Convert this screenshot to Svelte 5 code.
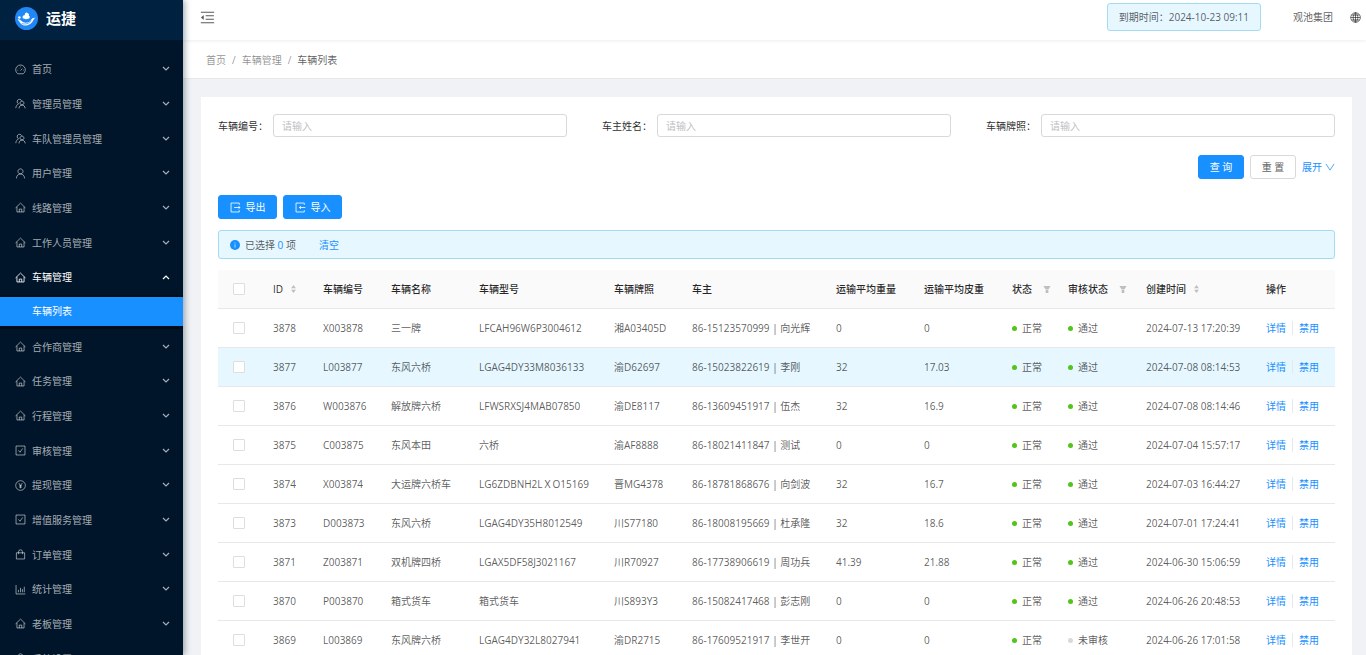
<script>
    // Sidebar menu
    const menu = [
        { label: '首页', icon: 'dashboard' },
        { label: '管理员管理', icon: 'team' },
        { label: '车队管理员管理', icon: 'team' },
        { label: '用户管理', icon: 'user' },
        { label: '线路管理', icon: 'home' },
        { label: '工作人员管理', icon: 'home' },
        { label: '车辆管理', icon: 'home', open: true, children: ['车辆列表'] },
        { label: '合作商管理', icon: 'home' },
        { label: '任务管理', icon: 'home' },
        { label: '行程管理', icon: 'home' },
        { label: '审核管理', icon: 'check' },
        { label: '提现管理', icon: 'money' },
        { label: '增值服务管理', icon: 'check' },
        { label: '订单管理', icon: 'bag' },
        { label: '统计管理', icon: 'chart' },
        { label: '老板管理', icon: 'home' },
        { label: '系统设置', icon: 'user' }
    ];

    // Stroke paths on a 16x16 grid
    const icons = {
        dashboard: 'M4 14.2a7 7 0 1 1 8 0zM8 9.5l2.6-2.8M3.6 9h1M11.6 9h1M8 3.8v1M4.8 5.6l.7.7',
        team: 'M5.2 8.4a3.4 3.4 0 1 1 4.4-4.6M1.2 14.8c.2-3 1.600-5.200 4-6.400M10.2 10.200a2.900 2.900 0 1 0-.1 0M5.800 15.200c.2-3 2-5 4.400-5s4.400 2 4.600 5',
        user: 'M8 8.600a3.700 3.700 0 1 0-.1 0M2 15.200c.3-4 2.700-6.600 6-6.600s5.700 2.600 6 6.600',
        home: 'M.8 8.600L8 1.600l7.200 7M2.800 7v7.500h10.400V7M6.200 14.500V10.300h3.600v4.200',
        check: 'M1.500 1.500h13v13h-13zM5 7.800l2.300 2.700L11.200 5',
        money: 'M8 1a7 7 0 1 0 .1 0zM5.500 4.500L8 8l2.500-3.500M8 8v4M6 8.300h4M6 10.300h4',
        bag: 'M2 5.500h12v9H2zM5.200 7.500V4a2.800 2.800 0 0 1 5.600 0v3.500',
        chart: 'M1.500 1.500v13h13.500M5 12V8.500M8 12V5.500M10.800 12V7.500M13.500 12V4',
        export: 'M13.500 4V1.500h-12v13h12V12M6 8h8.500M12.300 5.800L14.500 8l-2.200 2.200',
        import: 'M13.500 4V1.500h-12v13h12V12M15 8H6.500M8.700 5.800L6.500 8l2.200 2.200',
        globe: 'M8 1a7 7 0 1 0 .1 0zM8 1v14M1 8h14M2.200 4.500h11.600M2.200 11.500h11.600M8 1C3.500 5 3.500 11 8 15M8 1c4.500 4 4.500 10 0 14',
        down: 'M1.500 3L8 13l6.500-10'
    };

    const fields = [
        { id: 'code', label: '车辆编号' },
        { id: 'owner', label: '车主姓名' },
        { id: 'plate', label: '车辆牌照' }
    ];
    let query = { code: '', owner: '', plate: '' };

    const columns = [
        { title: 'ID', width: 50, sort: true },
        { title: '车辆编号', width: 68 },
        { title: '车辆名称', width: 88 },
        { title: '车辆型号', width: 135 },
        { title: '车辆牌照', width: 78 },
        { title: '车主', width: 144 },
        { title: '运输平均重量', width: 88 },
        { title: '运输平均皮重', width: 88 },
        { title: '状态', width: 56, filter: true },
        { title: '审核状态', width: 78, filter: true },
        { title: '创建时间', width: 120, sort: true },
        { title: '操作', width: 81 }
    ];

    const rows = [
        { id: 3878, code: 'X003878', name: '三一牌', model: 'LFCAH96W6P3004612', plate: '湘A03405D', owner: '86-15123570999 | 向光辉', gross: '0', tare: '0', passed: true, created: '2024-07-13 17:20:39' },
        { id: 3877, code: 'L003877', name: '东风六桥', model: 'LGAG4DY33M8036133', plate: '渝D62697', owner: '86-15023822619 | 李刚', gross: '32', tare: '17.03', passed: true, created: '2024-07-08 08:14:53' },
        { id: 3876, code: 'W003876', name: '解放牌六桥', model: 'LFWSRXSJ4MAB07850', plate: '渝DE8117', owner: '86-13609451917 | 伍杰', gross: '32', tare: '16.9', passed: true, created: '2024-07-08 08:14:46' },
        { id: 3875, code: 'C003875', name: '东风本田', model: '六桥', plate: '渝AF8888', owner: '86-18021411847 | 测试', gross: '0', tare: '0', passed: true, created: '2024-07-04 15:57:17' },
        { id: 3874, code: 'X003874', name: '大运牌六桥车', model: 'LG6ZDBNH2LＸO15169', plate: '晋MG4378', owner: '86-18781868676 | 向剑波', gross: '32', tare: '16.7', passed: true, created: '2024-07-03 16:44:27' },
        { id: 3873, code: 'D003873', name: '东风六桥', model: 'LGAG4DY35H8012549', plate: '川S77180', owner: '86-18008195669 | 杜承隆', gross: '32', tare: '18.6', passed: true, created: '2024-07-01 17:24:41' },
        { id: 3871, code: 'Z003871', name: '双机牌四桥', model: 'LGAX5DF58J3021167', plate: '川R70927', owner: '86-17738906619 | 周功兵', gross: '41.39', tare: '21.88', passed: true, created: '2024-06-30 15:06:59' },
        { id: 3870, code: 'P003870', name: '箱式货车', model: '箱式货车', plate: '川S893Y3', owner: '86-15082417468 | 彭志刚', gross: '0', tare: '0', passed: true, created: '2024-06-26 20:48:53' },
        { id: 3869, code: 'L003869', name: '东风牌六桥', model: 'LGAG4DY32L8027941', plate: '渝DR2715', owner: '86-17609521917 | 李世开', gross: '0', tare: '0', passed: false, created: '2024-06-26 17:01:58' }
    ];

    let selected = [];
    let hoveredId = 3877;

    function toggleAll(event) {
        selected = event.target.checked ? rows.map((row) => row.id) : [];
    }

    function resetQuery() {
        query = { code: '', owner: '', plate: '' };
    }
</script>

{#snippet icon(name)}
    <svg class="icon" viewBox="0 0 16 16" aria-hidden="true"><path d={icons[name]} /></svg>
{/snippet}

<div class="layout">
    <aside class="sidebar">
        <a class="brand" href="#home">
            <svg class="brand-logo" viewBox="0 0 24 24" aria-hidden="true">
                <circle cx="12" cy="12" r="12" fill="#2087f5" />
                <path d="M8 11.500c-.6-2 .8-3.200 2.200-2.900C10 6.500 11.800 5 13.300 6.400c1.500.3 1.700 1.700 1 2.600 1.700.3 1.500 2.600-.4 3.300-1.800.6-4.400.6-5.900-.8z" fill="#fff" />
                <path d="M2.800 13c2-.6 3.400 1.500 5.400 2.600 3.600 1.800 7 .4 8.500-2.100 1-1.600 2.600-2.500 4.700-2.300-1.800.9-2.300 3-3.600 4.800-1.800 2.400-4.800 3.700-8 3.200C6 18.700 5 15.500 2.800 13z" fill="#fff" />
                <path d="M7 17.300c3.500 1 7.500.3 10-3" fill="none" stroke="#2087f5" stroke-width=".7" />
                <circle cx="4.600" cy="11" r="1.300" fill="#fff" />
            </svg>
            <span>运捷</span>
        </a>
        <ul class="menu">
            {#each menu as item}
                <li>
                    <button class="menu-item" class:open={item.open}>
                        {@render icon(item.icon)}
                        <span>{item.label}</span>
                        <svg class="arrow" viewBox="0 0 8 6" aria-hidden="true"><path d="M1 1l3 3 3-3" /></svg>
                    </button>
                </li>
                {#each item.children ?? [] as child}
                    <li class="sub"><a class="sub-item" href="#list">{child}</a></li>
                {/each}
            {/each}
        </ul>
    </aside>

    <div class="main">
        <header class="topbar">
            <button class="fold" aria-label="收起菜单">
                <svg viewBox="0 0 1024 1024" aria-hidden="true">
                    <path d="M408 442h480c4.400 0 8-3.600 8-8v-56c0-4.400-3.600-8-8-8H408c-4.400 0-8 3.600-8 8v56c0 4.400 3.600 8 8 8zm-8 204c0 4.400 3.600 8 8 8h480c4.400 0 8-3.600 8-8v-56c0-4.400-3.600-8-8-8H408c-4.400 0-8 3.600-8 8v56zm504-486H120c-4.400 0-8 3.600-8 8v56c0 4.400 3.600 8 8 8h784c4.400 0 8-3.600 8-8v-56c0-4.400-3.600-8-8-8zm0 632H120c-4.400 0-8 3.600-8 8v56c0 4.400 3.600 8 8 8h784c4.400 0 8-3.600 8-8v-56c0-4.400-3.600-8-8-8zM115.400 518.900L271.700 642c5.800 4.600 14.400.5 14.400-6.900V388.900c0-7.400-8.500-11.500-14.400-6.900L115.400 505.100a8.700 8.700 0 000 13.800z" />
                </svg>
            </button>
            <div class="expire">到期时间：2024-10-23 09:11</div>
            <a class="company" href="#account">观池集团</a>
            <button class="lang" aria-label="切换语言">{@render icon('globe')}</button>
        </header>

        <nav class="breadcrumb">
            <a href="#home">首页</a><i>/</i><a href="#vehicles">车辆管理</a><i>/</i><span>车辆列表</span>
        </nav>

        <main class="card">
            <form class="search" on:submit|preventDefault>
                {#each fields as field}
                    <div class="field">
                        <label for={field.id}>{field.label}：</label>
                        <input id={field.id} type="text" placeholder="请输入" bind:value={query[field.id]} />
                    </div>
                {/each}
                <div class="actions">
                    <button class="btn primary" type="submit">查 询</button>
                    <button class="btn" type="button" on:click={resetQuery}>重 置</button>
                    <a class="expand" href="#expand">展开{@render icon('down')}</a>
                </div>
            </form>

            <div class="toolbar">
                <button class="btn primary tool">{@render icon('export')}导出</button>
                <button class="btn primary tool">{@render icon('import')}导入</button>
            </div>

            <div class="alert">
                <svg class="info" viewBox="0 0 16 16" aria-hidden="true">
                    <circle cx="8" cy="8" r="8" fill="#1890ff" />
                    <path d="M8 4v1.500M8 7v5" stroke="#e6f7ff" stroke-width="1.200" />
                </svg>
                <span>已选择 <em>{selected.length}</em> 项</span>
                <a href="#clear" on:click|preventDefault={() => (selected = [])}>清空</a>
            </div>

            <table>
                <colgroup>
                    <col style="width: 43px" />
                    {#each columns as column}
                        <col style="width: {column.width}px" />
                    {/each}
                </colgroup>
                <thead>
                    <tr>
                        <th class="pick"><input type="checkbox" aria-label="全选" on:change={toggleAll} /></th>
                        {#each columns as column}
                            <th>
                                <div class="head">
                                    {column.title}
                                    {#if column.sort}
                                        <svg class="sorter" viewBox="0 0 6 10" aria-hidden="true"><path d="M0 4l3-4 3 4zM0 6l3 4 3-4z" /></svg>
                                    {/if}
                                    {#if column.filter}
                                        <svg class="filter" viewBox="0 0 10 10" aria-hidden="true"><path d="M1 1h8L6.500 5h-3zM3.500 5.600h3V9h-3z" /></svg>
                                    {/if}
                                </div>
                            </th>
                        {/each}
                    </tr>
                </thead>
                <tbody>
                    {#each rows as row}
                        <tr class:hovered={row.id === hoveredId} on:mouseenter={() => (hoveredId = row.id)}>
                            <td class="pick">
                                <input type="checkbox" aria-label="选择 {row.id}" value={row.id} bind:group={selected} />
                            </td>
                            <td>{row.id}</td>
                            <td>{row.code}</td>
                            <td>{row.name}</td>
                            <td>{row.model}</td>
                            <td>{row.plate}</td>
                            <td>{row.owner}</td>
                            <td>{row.gross}</td>
                            <td>{row.tare}</td>
                            <td><span class="status">正常</span></td>
                            <td><span class="status" class:pending={!row.passed}>{row.passed ? '通过' : '未审核'}</span></td>
                            <td>{row.created}</td>
                            <td class="links"><a href="#detail">详情</a><a href="#disable">禁用</a></td>
                        </tr>
                    {/each}
                </tbody>
            </table>
        </main>
    </div>
</div>

<style>
    :global(body) {
        margin: 0;
        background: #f0f2f5;
    }

    .layout {
        display: flex;
        height: 100vh;
        overflow: hidden;
        font-family: 'Open Sans', 'Noto Sans CJK SC', sans-serif;
        font-size: 10px;
        line-height: 16px;
        color: rgba(0, 0, 0, 0.65);
    }

    a {
        color: #1890ff;
        text-decoration: none;
    }

    button {
        font: inherit;
        cursor: pointer;
    }

    .icon {
        width: 11px;
        height: 11px;
        flex: none;
        fill: none;
        stroke: currentColor;
        stroke-width: 1.2;
    }

    /* Sidebar */
    .sidebar {
        position: relative;
        z-index: 2;
        flex: none;
        width: 183px;
        background: #001529;
        box-shadow: 2px 0 6px rgba(0, 21, 41, 0.35);
    }

    .brand {
        display: flex;
        align-items: center;
        gap: 8px;
        box-sizing: border-box;
        height: 40px;
        padding: 0 15px 4px;
        background: #002140;
        color: #fff;
        font-size: 15px;
        font-weight: bold;
    }

    .brand-logo {
        width: 23px;
        height: 23px;
    }

    .menu {
        display: grid;
        grid-auto-rows: 1fr;
        height: 624px;
        margin: 0;
        padding: 12px 0 0;
        list-style: none;
    }

    .menu li {
        display: flex;
        align-items: center;
    }

    .menu-item {
        display: flex;
        align-items: center;
        gap: 6px;
        width: 100%;
        height: 29px;
        padding: 0 13px 0 15px;
        border: 0;
        background: none;
        color: rgba(255, 255, 255, 0.65);
    }

    .menu-item.open {
        color: #fff;
    }

    .arrow {
        width: 8px;
        height: 6px;
        margin-left: auto;
        fill: none;
        stroke: currentColor;
        stroke-width: 1.2;
    }

    .open .arrow {
        transform: rotate(180deg);
    }

    .menu .sub {
        background: #000c17;
    }

    .sub-item {
        flex: 1;
        padding-left: 32px;
        line-height: 29px;
        background: #1890ff;
        color: #fff;
    }

    /* Header */
    .main {
        flex: 1;
        min-width: 0;
    }

    .topbar {
        position: relative;
        z-index: 1;
        display: flex;
        align-items: center;
        box-sizing: border-box;
        height: 40px;
        padding: 0 5px 6px 16px;
        background: #fff;
        box-shadow: 0 1px 3px rgba(0, 21, 41, 0.08);
    }

    .fold,
    .lang {
        display: flex;
        padding: 0;
        border: 0;
        background: none;
        color: rgba(0, 0, 0, 0.65);
    }

    .fold svg {
        width: 17px;
        height: 17px;
        fill: currentColor;
    }

    .expire {
        margin-left: auto;
        padding: 5px 11px;
        border: 1px solid #a3dcf2;
        border-radius: 3px;
        background: #e6f7ff;
    }

    .company {
        margin: 0 17px 0 32px;
        color: rgba(0, 0, 0, 0.65);
    }

    .breadcrumb {
        padding: 12px 23px 10px;
        background: #fff;
        border-bottom: 1px solid #e8e8e8;
    }

    .breadcrumb a,
    .breadcrumb i {
        color: rgba(0, 0, 0, 0.45);
        font-style: normal;
    }

    .breadcrumb i {
        margin: 0 6px;
    }

    /* Search form */
    .card {
        margin: 18px 14px 0 18px;
        padding: 17px;
        background: #fff;
    }

    .search {
        display: grid;
        grid-template-columns: repeat(3, 1fr);
        gap: 18px 35px;
    }

    .field {
        display: flex;
        align-items: center;
    }

    .field label {
        width: 55px;
        color: rgba(0, 0, 0, 0.85);
    }

    .field input {
        flex: 1;
        box-sizing: border-box;
        min-width: 0;
        height: 23px;
        padding: 0 8px;
        border: 1px solid #d9d9d9;
        border-radius: 3px;
        font: inherit;
    }

    .field input::placeholder {
        color: #bfbfbf;
    }

    .actions {
        grid-column: 1 / -1;
        display: flex;
        justify-content: flex-end;
        align-items: center;
        gap: 6px;
    }

    .btn {
        display: flex;
        align-items: center;
        justify-content: center;
        gap: 5px;
        box-sizing: border-box;
        min-width: 46px;
        height: 24px;
        padding: 0 10px;
        border: 1px solid #d9d9d9;
        border-radius: 3px;
        background: #fff;
        color: rgba(0, 0, 0, 0.65);
    }

    .primary {
        border-color: #1890ff;
        background: #1890ff;
        color: #fff;
    }

    .expand {
        display: flex;
        align-items: center;
        gap: 3px;
    }

    .expand .icon {
        width: 10px;
        height: 10px;
    }

    .toolbar {
        display: flex;
        gap: 6px;
        margin: 16px 0 11px;
    }

    .tool {
        min-width: 59px;
    }

    .alert {
        display: flex;
        align-items: center;
        gap: 5px;
        margin-bottom: 11px;
        padding: 6px 11px 5px;
        border: 1px solid #a3dcf2;
        border-radius: 3px;
        background: #e6f7ff;
    }

    .alert em {
        color: #1890ff;
        font-style: normal;
    }

    .alert a {
        margin-left: 18px;
    }

    .info {
        width: 10px;
        height: 10px;
    }

    /* Table */
    table {
        width: 100%;
        table-layout: fixed;
        border-collapse: separate;
        border-spacing: 0;
    }

    th,
    td {
        box-sizing: border-box;
        height: 39px;
        padding: 0 0 0 12px;
        border-bottom: 1px solid #e8e8e8;
        text-align: left;
        white-space: nowrap;
    }

    th {
        background: #fafafa;
        color: rgba(0, 0, 0, 0.85);
        font-weight: 500;
    }

    .hovered td {
        background: #e6f7ff;
    }

    th.pick,
    td.pick {
        padding: 0 0 0 15px;
    }

    .pick input {
        display: block;
        appearance: none;
        box-sizing: border-box;
        width: 12px;
        height: 12px;
        margin: 0;
        border: 1px solid #dedede;
        border-radius: 1px;
        background: #fff;
    }

    .pick input:checked {
        border-color: #1890ff;
        background: #1890ff;
    }

    .head {
        display: flex;
        align-items: center;
        gap: 8px;
    }

    .sorter {
        width: 5px;
        height: 8px;
        fill: #bfbfbf;
    }

    .filter {
        width: 10px;
        height: 9px;
        margin-left: 2px;
        fill: #bfbfbf;
    }

    .status {
        display: flex;
        align-items: center;
        gap: 5px;
    }

    .status::before {
        content: '';
        width: 5px;
        height: 5px;
        border-radius: 50%;
        background: #52c41a;
    }

    .status.pending::before {
        background: #d9d9d9;
    }

    .links a + a {
        margin-left: 6px;
        padding-left: 6px;
        border-left: 1px solid #e8e8e8;
    }
</style>
